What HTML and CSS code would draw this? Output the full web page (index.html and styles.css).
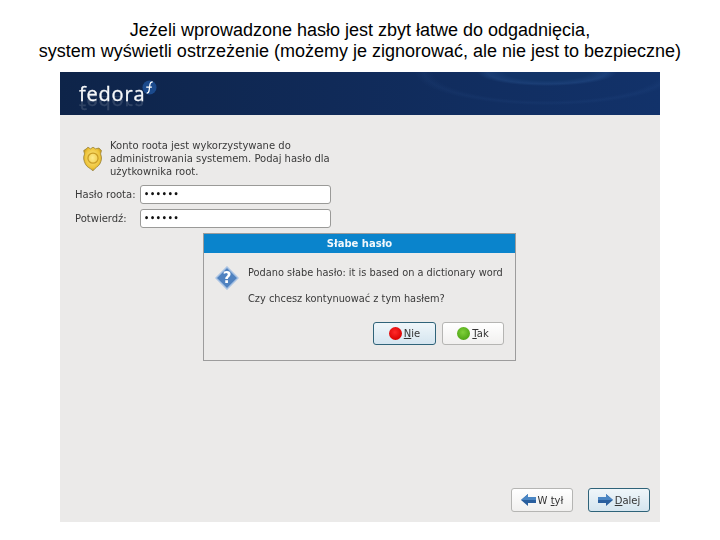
FILE: index.html
```html
<!DOCTYPE html>
<html lang="pl">
<head>
<meta charset="utf-8">
<title>Słabe hasło</title>
<link rel="stylesheet" href="styles.css">
</head>
<body>
<h1 class="caption">Jeżeli wprowadzone hasło jest zbyt łatwe do odgadnięcia,<br>system wyświetli ostrzeżenie (możemy je zignorować, ale nie jest to bezpieczne)</h1>
<main class="shot">
  <header class="banner">
    <span class="logo">fedora</span>
    <svg class="logo-mark" width="15" height="15" viewBox="0 0 16 16"><circle cx="8" cy="8" r="7.500" fill="#1b4a8c"/><path d="M5 14c2 0 2.300-1 2.600-3l.8-6c.3-2 1-3 3-3M4.500 7.500h6" fill="none" stroke="#fff" stroke-width="1.300"/></svg>
  </header>
  <section class="content">
    <div class="intro">
      <svg class="badge" width="22" height="30" viewBox="0 0 26 32">
        <defs><radialGradient id="gold" cx="50%" cy="45%" r="60%"><stop offset="0" stop-color="#fdeb8c"/><stop offset=".7" stop-color="#eec43a"/><stop offset="1" stop-color="#b98d18"/></radialGradient></defs>
        <path d="M7 2l3 2 3-2 3 2 4-1 3 3-1 4c2 5 1 8-1 12-2 3-5 4-8 8-3-3-7-4-9-8-2-4-3-8-1-12L2 6l3-2z" fill="url(#gold)" stroke="#8f7a30" stroke-width=".8"/>
        <circle cx="13" cy="15" r="6" fill="none" stroke="#c99d25" stroke-width="1.500"/>
      </svg>
      <p class="intro-text">Konto roota jest wykorzystywane do administrowania systemem. Podaj hasło dla użytkownika root.</p>
    </div>
    <div class="field"><label class="field-label">Hasło roota:</label><div class="input">••••••</div></div>
    <div class="field"><label class="field-label">Potwierdź:</label><div class="input">••••••</div></div>
    <div class="nav">
      <button class="btn nav-btn">
        <svg width="15" height="12" viewBox="0 0 15 12"><path d="M0 6l7-6v3h8v6H7v3z" fill="#2a5f9e"/><path d="M7 3h8v3H0L7 0z" fill="#4a86c4"/></svg>
        <span>W <u>t</u>ył</span>
      </button>
      <button class="btn nav-btn focus">
        <svg width="15" height="12" viewBox="0 0 15 12"><path d="M15 6L8 0v3H0v6h8v3z" fill="#2a5f9e"/><path d="M8 3H0v3h15L8 0z" fill="#4a86c4"/></svg>
        <span><u>D</u>alej</span>
      </button>
    </div>
  </section>
  <div class="dialog">
    <div class="dialog-title">Słabe hasło</div>
    <div class="dialog-body">
      <svg class="q-icon" width="24" height="24" viewBox="0 0 24 24"><path d="M12 1l11 11-11 11L1 12z" fill="#4f82c0" stroke="#a9c3e3" stroke-width="1.500"/><text x="12" y="17" text-anchor="middle" class="q-mark">?</text></svg>
      <div class="dialog-text">
        <p class="dialog-line">Podano słabe hasło: it is based on a dictionary word</p>
        <p class="dialog-line">Czy chcesz kontynuować z tym hasłem?</p>
      </div>
    </div>
    <div class="dialog-actions">
      <button class="btn dlg-btn focus"><span class="dot red"></span><span><u>N</u>ie</span></button>
      <button class="btn dlg-btn"><span class="dot green"></span><span><u>T</u>ak</span></button>
    </div>
  </div>
</main>
</body>
</html>
```
FILE: styles.css
```css
* { box-sizing: border-box; }
html, body { margin: 0; padding: 0; background: #fff; }
body { width: 720px; height: 540px; overflow: hidden; }
.caption {
  margin: 0;
  height: 72px;
  padding-top: 20px;
  font: 400 18px/21px "Liberation Sans", Arial, sans-serif;
  color: #000;
  text-align: center;
}
.shot {
  position: relative;
  width: 600px;
  height: 450px;
  margin-left: 60px;
  background: #ebeae9;
  display: flex;
  flex-direction: column;
  font-family: "DejaVu Sans", sans-serif;
  font-size: 10px;
  color: #3a3a3a;
  filter: blur(.35px);
}
.banner {
  flex: none;
  height: 43px;
  background:
    radial-gradient(ellipse 135px 34px at 487px 0, transparent 0 84%, rgba(70,120,190,.07) 91%, transparent 98%),
    radial-gradient(ellipse 70px 14px at 487px 0, #123468 0 60%, rgba(70,130,200,.18) 85%, transparent 100%),
    linear-gradient(90deg, #0e2449 0%, #102a58 45%, #12326a 100%);
  display: flex;
  align-items: flex-start;
  padding: 9px 0 0 19px;
}
.logo {
  position: relative;
  font: 400 20px/26px "Open Sans", "DejaVu Sans", sans-serif;
  color: #f6f8fa;
  letter-spacing: .8px;
  -webkit-text-stroke: .3px #f6f8fa;
}
.logo::after {
  content: "fedora";
  position: absolute;
  left: 0;
  top: 15px;
  transform: scaleY(-1);
  opacity: .14;
  overflow: hidden;
  height: 19px;
}
.logo-mark { margin: -1px 0 0 -3px; }
.content {
  flex: 1;
  display: flex;
  flex-direction: column;
  padding: 24px 10px 10px 15px;
}
.intro { display: flex; align-items: center; width: 270px; margin-left: 7px; }
.badge { flex: none; margin-right: 6px; }
.intro-text { margin: 0; line-height: 13px; width: 225px; }
.field { display: flex; align-items: center; height: 19px; margin-bottom: 5px; }
.intro + .field { margin-top: 7px; }
.field-label { width: 65px; }
.input {
  width: 191px;
  height: 19px;
  background: #fff;
  border: 1px solid #9a9a98;
  border-radius: 3px;
  padding-left: 3px;
  font-size: 8px;
  line-height: 17px;
  letter-spacing: .8px;
  font-weight: 700;
  color: #111;
}
.nav { margin-top: auto; display: flex; justify-content: flex-end; gap: 15px; }
.btn {
  display: flex;
  align-items: center;
  justify-content: center;
  gap: 2px;
  padding: 0;
  font: 10px "DejaVu Sans", sans-serif;
  color: #333;
  background: linear-gradient(180deg, #fff, #f1f0ef);
  border: 1px solid #b5b5b3;
  border-radius: 3px;
}
.btn.focus { background: linear-gradient(180deg, #eff6fa, #d5e5ef); border-color: #2f6379; }
.nav-btn { width: 62px; height: 24px; }
.dialog {
  position: absolute;
  left: 143px;
  top: 161px;
  width: 313px;
  height: 128px;
  background: #ebeae9;
  border: 1px solid #9c9c9c;
  display: flex;
  flex-direction: column;
}
.dialog-title {
  flex: none;
  height: 19px;
  background: #0a84cc;
  color: #f2f8fc;
  font-weight: 700;
  font-size: 10px;
  line-height: 19px;
  text-align: center;
}
.dialog-body { display: flex; padding: 13px 0 0 11px; }
.q-icon { flex: none; margin: 0 9px 0 0; }
.q-mark { font: 700 15px "DejaVu Sans", sans-serif; fill: #fff; }
.dialog-text { padding-left: 0; }
.dialog-line { margin: 0 0 13px; line-height: 13px; white-space: nowrap; font-size: 9.800px; }
.dialog-actions { display: flex; justify-content: flex-end; gap: 6px; padding: 4px 11px 0 0; }
.dlg-btn { width: 62px; height: 23px; }
.dlg-btn.focus { width: 63px; }
.dot { width: 13px; height: 13px; border-radius: 50%; }
.dot.red { background: radial-gradient(circle at 45% 40%, #ff2a2a, #d80000 75%, #a00); }
.dot.green { background: radial-gradient(circle at 45% 40%, #7fd03a, #4ea514 75%, #357a0c); }
```
